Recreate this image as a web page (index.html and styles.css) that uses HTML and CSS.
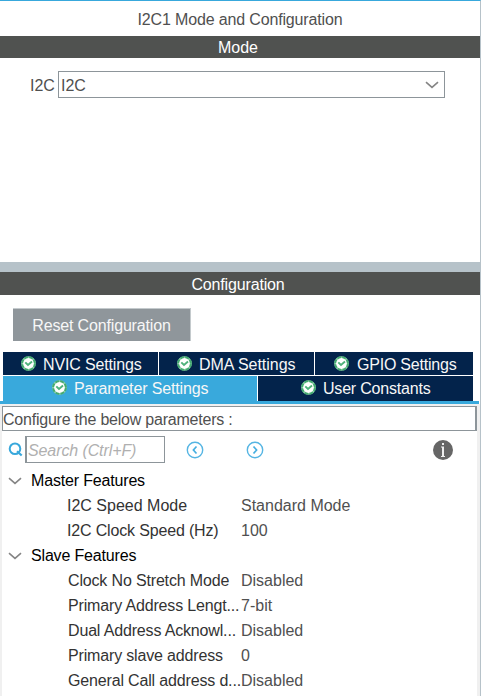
FILE: index.html
```html
<!DOCTYPE html>
<html lang="en">
<head>
<meta charset="utf-8">
<title>I2C1 Mode and Configuration</title>
<link rel="stylesheet" href="styles.css">
</head>
<body>
<svg class="defs" width="0" height="0">
  <symbol id="check" viewBox="0 0 15 15">
    <circle cx="7.5" cy="7.5" r="6.4" fill="#fff" stroke="#8fcfa8" stroke-width="1.9"/>
    <circle cx="7.5" cy="7.5" r="6.4" fill="none" stroke="#43aa70" stroke-width="1.9" stroke-dasharray="3.6 1.43"/>
    <path d="M4.3 6.3 7 9l4-3.5" fill="none" stroke="#4fb27b" stroke-width="1.9"/>
  </symbol>
  <symbol id="chevron" viewBox="0 0 14 8">
    <path d="M1 1.2 7 6.4l6-5.2" fill="none" stroke="#858585" stroke-width="1.6"/>
  </symbol>
</svg>
<main class="panel">
  <h1 class="title">I2C1 Mode and Configuration</h1>
  <h2 class="bar bar-mode">Mode</h2>
  <section class="mode">
    <label class="mode-label">I2C</label>
    <div class="select"><span>I2C</span><svg class="chevron" width="14" height="8"><use href="#chevron"/></svg></div>
  </section>
  <div class="splitter"></div>
  <h2 class="bar bar-config">Configuration</h2>
  <section class="config">
    <button class="reset">Reset Configuration</button>
    <nav class="tabs">
      <div class="tab-row three">
        <div class="tab nvic"><svg width="15" height="15"><use href="#check"/></svg>NVIC Settings</div>
        <div class="tab dma"><svg width="15" height="15"><use href="#check"/></svg>DMA Settings</div>
        <div class="tab gpio"><svg width="15" height="15"><use href="#check"/></svg>GPIO Settings</div>
      </div>
      <div class="tab-row two">
        <div class="tab param active"><svg width="15" height="15"><use href="#check"/></svg>Parameter Settings</div>
        <div class="tab user"><svg width="15" height="15"><use href="#check"/></svg>User Constants</div>
      </div>
    </nav>
  </section>
  <div class="strip"></div>
  <section class="content">
    <div class="hint">Configure the below parameters :</div>
    <div class="toolbar">
      <svg class="magnifier" width="15" height="15" viewBox="0 0 15 15"><circle cx="7" cy="6.7" r="5.3" fill="none" stroke="#38a8dc" stroke-width="2"/><path d="m9 9.2 4.7 4.3" stroke="#38a8dc" stroke-width="2.2"/></svg>
      <div class="search">Search (Ctrl+F)</div>
      <svg class="prev" width="18" height="18" viewBox="0 0 18 18"><circle cx="9" cy="9" r="7.7" fill="none" stroke="#55b5e3" stroke-width="1.4"/><path d="M10.5 5.5 7.4 9l3.1 3.5" fill="none" stroke="#45aee0" stroke-width="1.7"/></svg>
      <svg class="next" width="18" height="18" viewBox="0 0 18 18"><circle cx="9" cy="9" r="7.7" fill="none" stroke="#55b5e3" stroke-width="1.4"/><path d="M7.5 5.5 10.6 9l-3.1 3.5" fill="none" stroke="#45aee0" stroke-width="1.7"/></svg>
      <svg class="info" width="20" height="20" viewBox="0 0 20 20"><circle cx="10" cy="10" r="10" fill="#666"/><path d="M9 3h2v2H9zM8 6.5h3v9.5h1v1H8v-1h1V7.5H8z" fill="#eee"/></svg>
    </div>
    <div class="tree">
      <div class="group"><svg class="chevron" width="14" height="8"><use href="#chevron"/></svg>Master Features</div>
      <div class="row first loose"><span>I2C Speed Mode</span><span class="value">Standard Mode</span></div>
      <div class="row first"><span>I2C Clock Speed (Hz)</span><span class="value">100</span></div>
      <div class="group"><svg class="chevron" width="14" height="8"><use href="#chevron"/></svg>Slave Features</div>
      <div class="row"><span>Clock No Stretch Mode</span><span class="value">Disabled</span></div>
      <div class="row"><span>Primary Address Lengt...</span><span class="value">7-bit</span></div>
      <div class="row"><span>Dual Address Acknowl...</span><span class="value">Disabled</span></div>
      <div class="row"><span>Primary slave address</span><span class="value">0</span></div>
      <div class="row"><span>General Call address d...</span><span class="value">Disabled</span></div>
    </div>
  </section>
</main>
</body>
</html>
```
FILE: styles.css
```css
* { box-sizing: border-box; }
body { margin: 0; background: #fff; overflow: hidden; }
.defs { display: block; height: 0; }
.panel {
  display: flex; flex-direction: column;
  width: 481px; height: 696px;
  border-top: 1px solid #38a8dc;
  border-right: 1px solid #b6c2c9;
  font: 16px/20px "Liberation Sans", Arial, sans-serif;
  color: #505050; white-space: nowrap;
}
.title, .bar { margin: 0; font-size: 16px; font-weight: 400; text-align: center; flex: none; }
.title { height: 35px; line-height: 37px; letter-spacing: -.15px; }
.bar { background: #505250; color: #fff; }
.bar-mode { height: 22px; line-height: 24px; padding-right: 4px; }
.bar-config { height: 23px; line-height: 25px; padding-right: 4px; letter-spacing: -.15px; }
.mode { display: flex; height: 204px; padding: 13px 35px 0 30px; flex: none; }
.mode-label { width: 28px; line-height: 29px; }
.select {
  flex: 1; height: 27px; padding: 0 5px 0 2px; line-height: 27px;
  display: flex; align-items: center; justify-content: space-between;
  border: 1px solid #8d959a;
}
.select span { padding-top: 2px; }
.splitter { height: 10px; background: #b6c2c9; flex: none; }
.config { height: 106px; padding: 13px 7px 0 3px; flex: none; }
.reset {
  display: block; margin: 0 0 11px 10px; width: 178px; height: 33px; padding: 1px 0 0;
  border: 0 solid #c4cacd; border-width: 1px 1px 0 0; border-radius: 0;
  background: #8f969b; color: #f7f7f7; font: inherit; letter-spacing: -.16px;
}
.tabs { display: grid; grid-template-rows: 23px 25px; gap: 1px; }
.tab-row { display: grid; gap: 1px; }
.three { grid-template-columns: 155px 155px 158px; }
.two { grid-template-columns: 254px 215px; }
.tab { display: flex; align-items: center; gap: 7px; background: #03234b; color: #f7f7f7; padding-top: 2px; letter-spacing: -.15px; }
.tab svg { flex: none; margin-top: -2px; }
.nvic, .dma { padding-left: 18px; }
.dma { letter-spacing: -.04px; }
.gpio { padding-left: 19px; gap: 8px; letter-spacing: -.22px; }
.param { padding-left: 49px; }
.user { padding-left: 43px; letter-spacing: -.2px; }
.active { background: #39a9dc; }
.two .tab { padding-top: 1px; padding-bottom: 1px; }
.strip { height: 3px; margin-right: 1px; background: #39a9dc; flex: none; }
.content { flex: 1; padding: 2px 3px 0 2px; background: linear-gradient(#fff, #fff) 2px 2px / 475px 100% no-repeat #f0f0f0; }
.hint { height: 25px; line-height: 25px; border: 1px solid #8d959a; border-right-width: 2px; letter-spacing: -.22px; }
.toolbar { display: flex; align-items: center; height: 37px; padding-left: 6px; }
.search { width: 140px; height: 27px; margin-left: 2px; padding-left: 1px; line-height: 27px; border: 1px solid #8d959a; border-left-width: 2px; color: #b0b0b0; font-style: italic; letter-spacing: -.1px; }
.prev { margin-left: 21px; }
.next { margin-left: 42px; }
.info { margin-left: 169px; }
.group { display: flex; align-items: center; height: 25px; gap: 9px; padding-left: 6px; color: #000; letter-spacing: -.17px; }
.row { display: grid; grid-template-columns: 173px 1fr; height: 25px; line-height: 25px; padding-left: 66px; color: #333; letter-spacing: -.16px; }
.row.first { padding-left: 65px; grid-template-columns: 174px 1fr; }
.row.loose { letter-spacing: 0; }
.value { color: #505050; letter-spacing: 0; }
```
